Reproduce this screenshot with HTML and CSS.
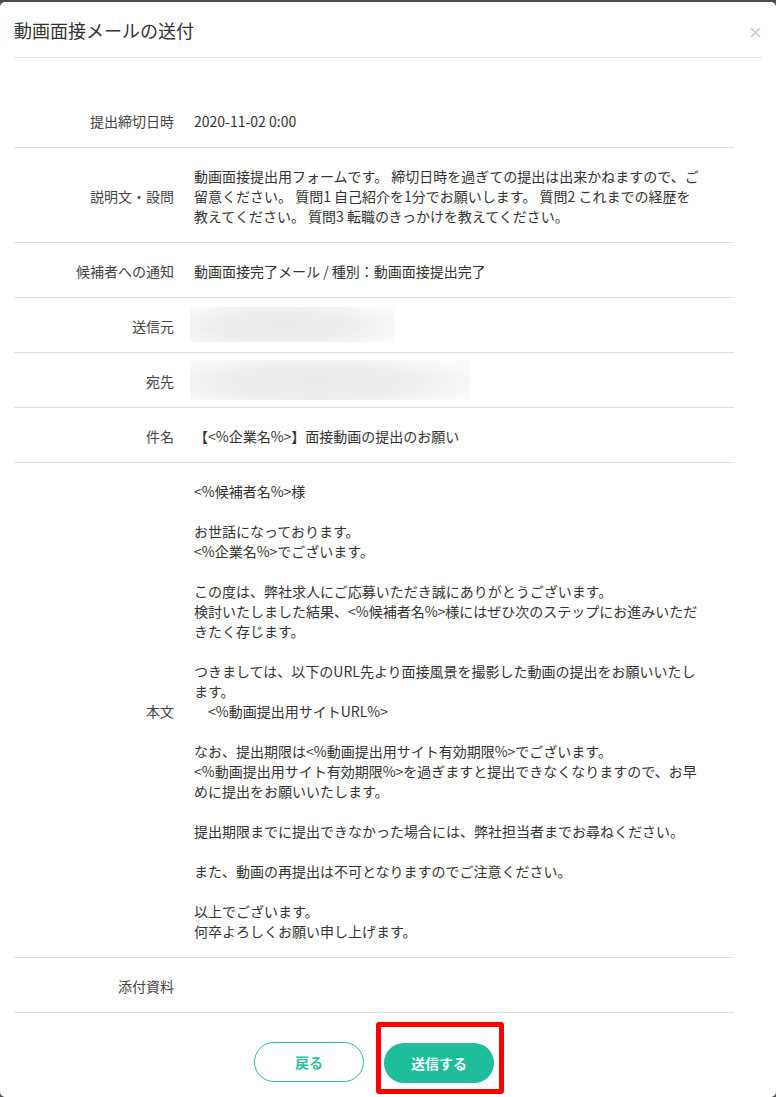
FILE: index.html
```html
<!DOCTYPE html>
<html lang="ja">
<head>
<meta charset="utf-8">
<title>動画面接メールの送付</title>
<link rel="stylesheet" href="styles.css">
</head>
<body>
<div class="modal">
  <div class="modal-header">
    <h1 class="modal-title">動画面接メールの送付</h1>
    <button class="close" aria-label="閉じる">
      <svg width="11" height="11" viewBox="0 0 11 11"><path d="M1 1L10 10M10 1L1 10" stroke="#c9c9c9" stroke-width="1.6" fill="none"/></svg>
    </button>
  </div>
  <div class="modal-body">
    <div class="rows">
      <div class="row"><div class="label">提出締切日時</div><div class="value">2020-11-02 0:00</div></div>
      <div class="row"><div class="label">説明文・設問</div><div class="value">動画面接提出用フォームです。 締切日時を過ぎての提出は出来かねますので、ご<br>留意ください。 質問1 自己紹介を1分でお願いします。 質問2 これまでの経歴を<br>教えてください。 質問3 転職のきっかけを教えてください。</div></div>
      <div class="row"><div class="label">候補者への通知</div><div class="value">動画面接完了メール / 種別：動画面接提出完了</div></div>
      <div class="row"><div class="label">送信元</div><div class="value"><div class="redact redact-from"></div></div></div>
      <div class="row"><div class="label">宛先</div><div class="value"><div class="redact redact-to"></div></div></div>
      <div class="row"><div class="label">件名</div><div class="value">【&lt;%企業名%&gt;】面接動画の提出のお願い</div></div>
      <div class="row"><div class="label">本文</div><div class="value mail-body">&lt;%候補者名%&gt;様

お世話になっております。
&lt;%企業名%&gt;でございます。

この度は、弊社求人にご応募いただき誠にありがとうございます。
検討いたしました結果、&lt;%候補者名%&gt;様にはぜひ次のステップにお進みいただ
きたく存じます。

つきましては、以下のURL先より面接風景を撮影した動画の提出をお願いいたし
ます。
　&lt;%動画提出用サイトURL%&gt;

なお、提出期限は&lt;%動画提出用サイト有効期限%&gt;でございます。
&lt;%動画提出用サイト有効期限%&gt;を過ぎますと提出できなくなりますので、お早
めに提出をお願いいたします。

提出期限までに提出できなかった場合には、弊社担当者までお尋ねください。

また、動画の再提出は不可となりますのでご注意ください。

以上でございます。
何卒よろしくお願い申し上げます。</div></div>
      <div class="row"><div class="label">添付資料</div><div class="value"></div></div>
    </div>
    <div class="actions">
      <button class="btn btn-back">戻る</button>
      <div class="send-wrap">
        <button class="btn btn-send">送信する</button>
        <span class="highlight"></span>
      </div>
    </div>
  </div>
</div>
</body>
</html>
```

FILE: styles.css
```css
html, body {
  margin: 0;
  padding: 0;
}
body {
  background: #4b4b4b;
  font-family: "Noto Sans CJK JP", "Noto Sans", sans-serif;
  color: #333;
  height: 1097px;
  overflow: hidden;
}
.modal {
  margin-top: 2px;
  height: 1095px;
  background: #fff;
  border-radius: 5px;
  padding: 0 14px;
  box-sizing: border-box;
}
.modal-header {
  display: flex;
  align-items: center;
  justify-content: space-between;
  padding: 16px 0 14px;
  border-bottom: 1px solid #e3e3e3;
}
.modal-title {
  margin: 0;
  font-size: 18px;
  font-weight: 400;
  line-height: 25px;
  color: #333;
}
.close {
  border: 0;
  background: none;
  padding: 0;
  margin-right: 1px;
  display: flex;
  margin-top: 3px;
}
.modal-body {
  width: 720px;
  padding-top: 35px;
}
.row {
  display: grid;
  grid-template-columns: 160px 1fr;
  column-gap: 20px;
  padding: 18px 0 16px;
  border-bottom: 1px solid #e0e0e0;
  font-size: 14px;
  line-height: 20px;
  align-items: center;
}
.label {
  text-align: right;
  color: #444;
}
.value {
  padding-right: 10px;
  color: #333;
  min-height: 20px;
  white-space: nowrap;
}
.mail-body {
  white-space: pre;
}
.redact {
  margin-left: -4px;
  background: radial-gradient(ellipse 62% 75% at 45% 55%, #ebebeb 0%, #eeeeee 55%, #f6f6f6 85%, #fbfbfb 100%);
}
.redact-from {
  width: 205px;
  height: 35px;
  margin-top: -9px;
  margin-bottom: -6px;
}
.redact-to {
  width: 280px;
  height: 40px;
  margin-top: -11px;
  margin-bottom: -9px;
}
.actions {
  display: flex;
  justify-content: center;
  gap: 20px;
  margin-top: 29px;
}
.btn {
  width: 110px;
  height: 40px;
  border-radius: 20px;
  font-family: "Noto Sans CJK JP", "Noto Sans", sans-serif;
  font-size: 14px;
  font-weight: 700;
  cursor: pointer;
  box-sizing: border-box;
}
.btn-back {
  background: #fff;
  border: 1px solid #2dbd9d;
  color: #2dbd9d;
}
.btn-send {
  background: #1ebd9b;
  border: 0;
  color: #fff;
  display: block;
}
.send-wrap {
  position: relative;
  padding-top: 1px;
}
.highlight {
  position: absolute;
  left: -8px;
  right: -10px;
  top: -20px;
  bottom: -11px;
  border: 5px solid #ff0000;
  border-radius: 3px;
  pointer-events: none;
}
```
